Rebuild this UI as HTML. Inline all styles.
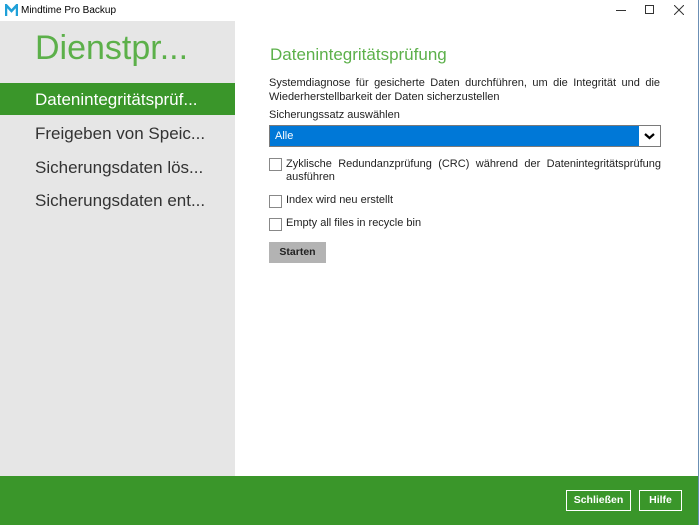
<!DOCTYPE html>
<html><head><meta charset="utf-8"><style>
*{margin:0;padding:0;box-sizing:border-box}
body{width:699px;height:525px;overflow:hidden;background:#fff;font-family:"Liberation Sans","DejaVu Sans",sans-serif;position:relative}
.win{position:absolute;left:0;top:0;width:699px;height:525px;border-right:1px solid #6b8fb5}
.title{position:absolute;left:0;top:0;width:699px;height:21px;background:#fff;font-size:10px;color:#000}
.title .t{position:absolute;left:21px;top:5px}
.side{position:absolute;left:0;top:21px;width:235px;height:455px;background:#e6e6e6}
.head{position:absolute;left:35px;top:8px;font-size:34px;color:#5cb04a;letter-spacing:0px}
.item{position:absolute;left:0;width:235px;height:32px;font-size:17px;color:#333;padding-left:35px;line-height:33px}
.item.sel{background:#3a962a;color:#fff}
h1{position:absolute;left:270px;top:45px;font-size:17px;font-weight:normal;color:#5cb04a}
.p{position:absolute;left:269px;font-size:11px;color:#222}
.sel2{position:absolute;left:269px;top:125px;width:392px;height:22px;background:#0078d7;border:1px solid #7a7a7a}
.sel2 span{position:absolute;left:5px;top:4px;color:#fff;font-size:11px}
.sel2 .arr{position:absolute;right:0;top:0;width:21px;height:20px;background:#fff}
.cb{position:absolute;left:269px;width:13px;height:13px;border:1px solid #888;background:#fff}
.btn{position:absolute;left:269px;top:242px;width:57px;height:21px;background:#b3b3b3;font-size:10.5px;font-weight:bold;text-align:center;line-height:21px;color:#222}
.foot{position:absolute;left:0;top:476px;width:698px;height:49px;background:#3a962a}
.fb{position:absolute;top:490px;height:21px;border:1.5px solid #fff;color:#fff;font-size:10.5px;font-weight:bold;text-align:center;line-height:18px}
</style></head><body>
<div class="title">
<svg style="position:absolute;left:5px;top:4px" width="13" height="13" viewBox="0 0 13 13"><path d="M1 12V1l5.5 6L12 1v11" stroke="#1fa0d8" stroke-width="2.5" fill="none"/></svg>
<span class="t">Mindtime Pro Backup</span>
<div style="position:absolute;left:616px;top:10px;width:10px;height:1px;background:#333"></div>
<div style="position:absolute;left:645px;top:5px;width:9px;height:9px;border:1px solid #333"></div>
<svg style="position:absolute;left:674px;top:5px" width="10" height="10"><path d="M0 0L10 10M10 0L0 10" stroke="#333" stroke-width="1"/></svg>
</div>
<div class="side">
<div class="head">Dienstpr...</div>
<div class="item sel" style="top:62px">Datenintegritätsprüf...</div>
<div class="item" style="top:96px">Freigeben von Speic...</div>
<div class="item" style="top:130px">Sicherungsdaten lös...</div>
<div class="item" style="top:163px">Sicherungsdaten ent...</div>
</div>
<div class="win"></div>
<h1>Datenintegritätsprüfung</h1>
<div class="p" style="top:76px;width:391px;text-align:justify;line-height:14px">Systemdiagnose für gesicherte Daten durchführen, um die Integrität und die Wiederherstellbarkeit der Daten sicherzustellen</div>
<div class="p" style="top:109px">Sicherungssatz auswählen</div>
<div class="sel2"><span>Alle</span><div class="arr"><svg width="21" height="20"><path d="M6 8l4.5 4 4.5-4" stroke="#000" stroke-width="2.2" fill="none"/></svg></div></div>
<div class="cb" style="top:158px"></div>
<div class="p" style="top:157px;left:286px;width:375px;text-align:justify;text-align-last:justify;line-height:14px">Zyklische Redundanzprüfung (CRC) während der Datenintegritätsprüfung</div>
<div class="p" style="top:171px;left:286px">ausführen</div>
<div class="cb" style="top:195px"></div>
<div class="p" style="top:194px;left:286px">Index wird neu erstellt</div>
<div class="cb" style="top:218px"></div>
<div class="p" style="top:217px;left:286px">Empty all files in recycle bin</div>
<div class="btn">Starten</div>
<div class="foot"></div>
<div class="fb" style="left:566px;width:65px">Schließen</div>
<div class="fb" style="left:639px;width:43px">Hilfe</div>
</body></html>
